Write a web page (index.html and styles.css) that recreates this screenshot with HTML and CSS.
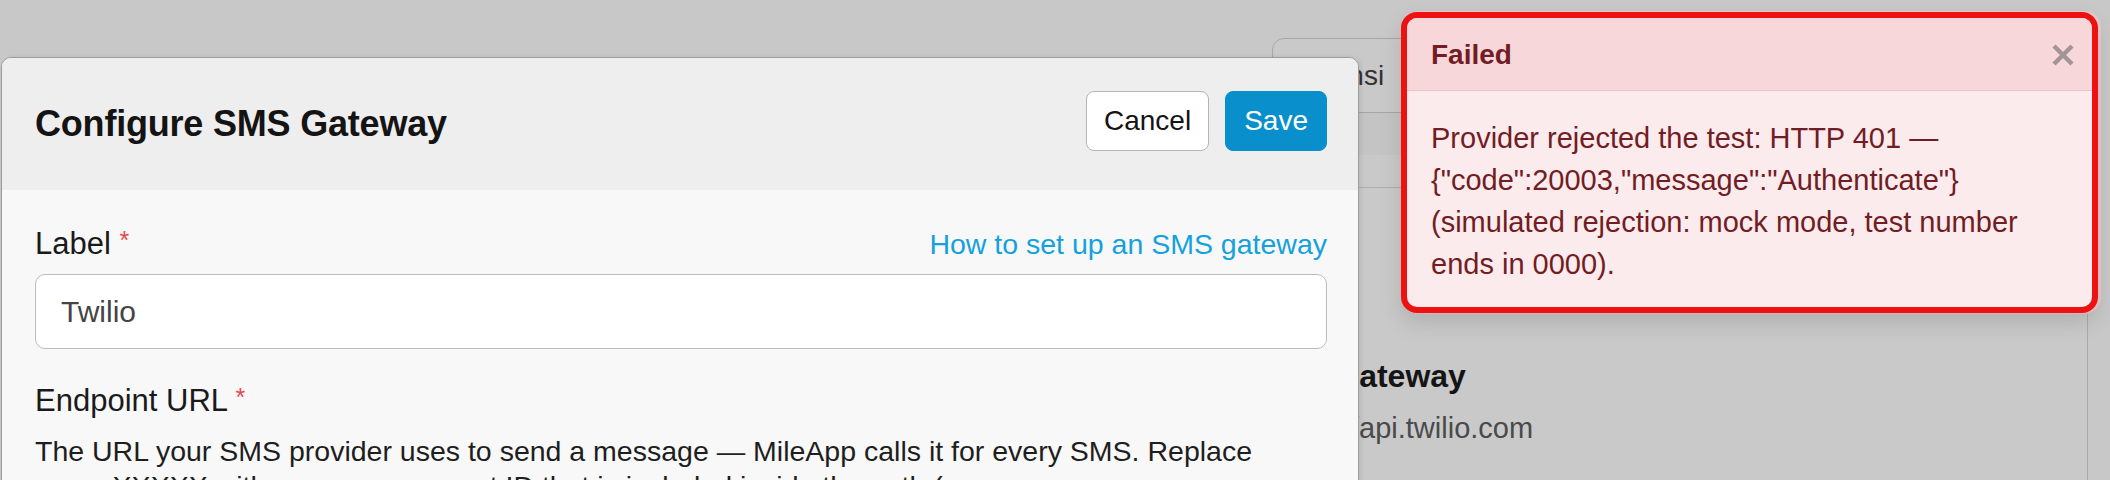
FILE: index.html
```html
<!DOCTYPE html>
<html lang="en">
<head>
<meta charset="utf-8">
<title>Configure SMS Gateway</title>
<link rel="stylesheet" href="styles.css">
</head>
<body>
  <div class="page">
    <div class="bg-panel">
      <div class="bg-tabs"><span class="bg-tab">Lisensi</span></div>
      <div class="bg-toolbar"></div>
      <div class="bg-card">
        <div class="bg-card-title">SMS Gateway</div>
        <div class="bg-card-url">https://api.twilio.com</div>
      </div>
    </div>
  </div>

  <div class="modal">
    <div class="modal-header">
      <h1 class="modal-title">Configure SMS Gateway</h1>
      <div class="modal-actions">
        <button class="btn btn-cancel" type="button">Cancel</button>
        <button class="btn btn-save" type="button">Save</button>
      </div>
    </div>
    <div class="modal-body">
      <div class="field-row">
        <label class="field-label">Label <span class="req">*</span></label>
        <a class="help-link" href="#">How to set up an SMS gateway</a>
      </div>
      <div class="text-input">Twilio</div>
      <div class="field-row field-row-gap">
        <label class="field-label">Endpoint URL <span class="req">*</span></label>
      </div>
      <p class="field-help">The URL your SMS provider uses to send a message — MileApp calls it for every SMS. Replace every XXXXX with your own account ID that is included inside the path (e.g. /Accounts/XXXXX/Messages).</p>
    </div>
  </div>

  <div class="toast">
    <div class="toast-header">
      <span class="toast-title">Failed</span>
      <svg class="toast-close" width="24" height="24" viewBox="0 0 24 24" aria-hidden="true">
        <path d="M3 3 L21 21 M21 3 L3 21" stroke="#a39597" stroke-width="4.5" stroke-linecap="butt" fill="none"/>
      </svg>
    </div>
    <div class="toast-body">Provider rejected the test: HTTP 401 — {"code":20003,"message":"Authenticate"} (simulated rejection: mock mode, test number ends in 0000).</div>
  </div>
</body>
</html>
```

FILE: styles.css
```css
* { box-sizing: border-box; }

html, body {
  margin: 0;
  padding: 0;
}

body {
  width: 2110px;
  height: 480px;
  overflow: hidden;
  background: #c8c8c8;
  font-family: "Liberation Sans", Arial, Helvetica, sans-serif;
  position: relative;
}

/* ---------- dimmed page behind the overlay ---------- */
.page {
  display: flex;
  padding-left: 1240px;
}

.bg-panel {
  width: 848px;
  display: flex;
  flex-direction: column;
}

.bg-tabs {
  margin-top: 38px;
  margin-left: 32px;
  height: 75px;
  border: 1.5px solid #a7a7a7;
  border-radius: 12px 12px 0 0;
  background: #c9c9c9;
  display: flex;
  align-items: center;
  padding-left: 24px;
}

.bg-tab {
  font-size: 28px;
  color: #333;
}

.bg-toolbar {
  margin-left: 32px;
  height: 75px;
  background: linear-gradient(#c4c4c4 0, #c4c4c4 42px, #c9c9c9 42px);
  border-bottom: 1.5px solid #adadad;
}

.bg-card {
  height: 300px;
  border-right: 1.5px solid #a9a9a9;
  background: #c9c9c9;
  padding: 168px 0 0 16px;
}

.bg-card-title {
  font-size: 32px;
  font-weight: bold;
  color: #151515;
  line-height: 40px;
}

.bg-card-url {
  margin-top: 14px;
  padding-left: 16px;
  font-size: 29px;
  color: #4a4a4a;
  line-height: 36px;
}

/* ---------- modal ---------- */
.modal {
  position: absolute;
  left: 1px;
  top: 57px;
  width: 1358px;
  height: 460px;
  border: 1px solid #9c9c9c;
  border-radius: 10px;
  overflow: hidden;
  background: #f8f8f8;
  display: flex;
  flex-direction: column;
  box-shadow: 2px 0 4px rgba(0, 0, 0, 0.08);
}

.modal-header {
  height: 132px;
  flex: none;
  background: #eeeeee;
  display: flex;
  align-items: center;
  justify-content: space-between;
  padding: 0 31px 0 33px;
}

.modal-title {
  margin: 0;
  font-size: 36px;
  font-weight: bold;
  color: #141414;
  letter-spacing: -0.2px;
}

.modal-actions {
  display: flex;
  gap: 16px;
  margin-bottom: 6px;
}

.btn {
  height: 60px;
  font-family: inherit;
  font-size: 28px;
  border-radius: 8px;
  cursor: pointer;
}

.btn-cancel {
  padding: 0 17px;
  background: #ffffff;
  color: #141414;
  border: 1.5px solid #b5b5b5;
}

.btn-save {
  padding: 0 18px;
  background: #0a8fcd;
  color: #ffffff;
  border: 1.5px solid #0a8fcd;
}

.modal-body {
  flex: 1;
  background: #f8f8f8;
  padding: 34px 31px 0 33px;
}

.field-row {
  height: 40px;
  display: flex;
  align-items: center;
  justify-content: space-between;
}

.field-row-gap {
  margin-top: 32px;
}

.field-label {
  font-size: 31px;
  color: #1a1a1a;
}

.req {
  color: #e5484d;
  font-size: 25px;
  vertical-align: 5px;
}

.help-link {
  font-size: 28.5px;
  color: #15a1dc;
  text-decoration: none;
}

.text-input {
  margin-top: 10px;
  height: 75px;
  background: #ffffff;
  border: 1.5px solid #bcbcbc;
  border-radius: 10px;
  padding-left: 25px;
  display: flex;
  align-items: center;
  font-size: 30px;
  color: #444444;
}

.field-help {
  margin: 13px 0 0;
  font-size: 28.5px;
  line-height: 35px;
  color: #1e1e1e;
  padding-right: 60px;
}

/* ---------- toast ---------- */
.toast {
  position: absolute;
  left: 1401px;
  top: 12px;
  width: 697px;
  height: 301px;
  border: 6px solid #ee1111;
  border-radius: 16px;
  overflow: hidden;
  background: #fcebec;
  box-shadow: 0 10px 22px rgba(0, 0, 0, 0.12), 2px 0 0 1px rgba(248, 200, 205, 0.8);
}

.toast-header {
  height: 73px;
  background: #f8d7da;
  border-bottom: 1px solid #f1c2c6;
  display: flex;
  align-items: center;
  justify-content: space-between;
  padding: 2px 17px 0 24px;
}

.toast-title {
  font-size: 28px;
  font-weight: bold;
  color: #721c24;
}

.toast-close {
  display: block;
}

.toast-body {
  padding: 26px 30px 0 24px;
  font-size: 29px;
  line-height: 42px;
  color: #721c24;
}
```
